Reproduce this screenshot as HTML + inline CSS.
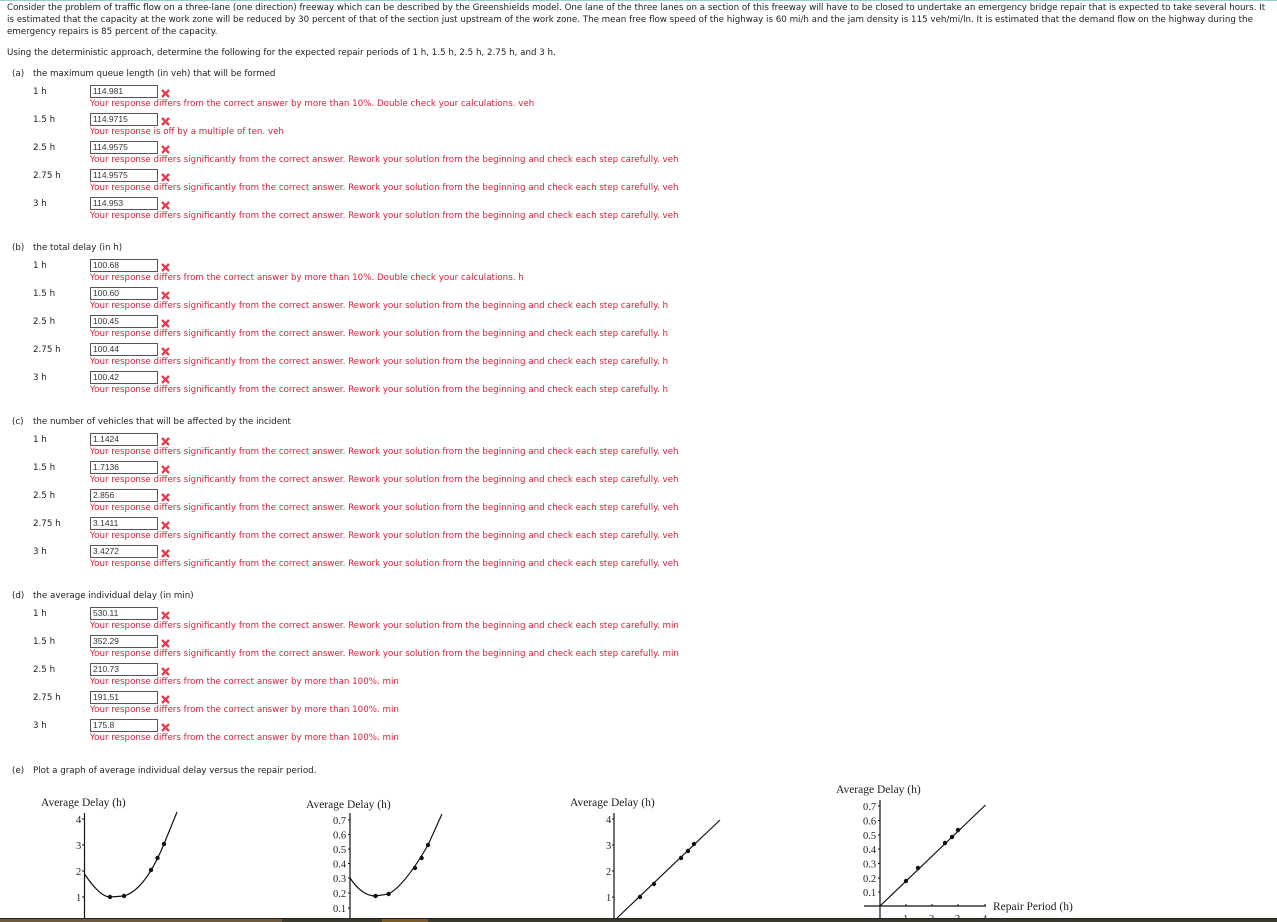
<!DOCTYPE html>
<html><head><meta charset="utf-8"><style>
body{margin:0;width:1277px;height:922px;overflow:hidden;background:#fff;position:relative;font-family:"DejaVu Sans","Liberation Sans",sans-serif;font-size:8.7px;color:#222;}
.t{position:absolute;white-space:nowrap;line-height:12px;}
.e{color:#d8203c;}
.b{position:absolute;width:64px;height:11px;border:1px solid #555;font-family:"Liberation Sans",sans-serif;font-size:8.5px;line-height:11px;padding-left:2px;color:#333;box-sizing:content-box;}
.x{position:absolute;width:9px;height:9px;}
svg text{font-family:"Liberation Serif","DejaVu Serif",serif;font-size:10.5px;fill:#222;}
svg text.ti{font-size:11.5px;}
</style></head><body>
<div style="position:absolute;left:0;top:0;width:1277px;height:1px;background:#9cc"></div>
<div class="t" style="left:7px;top:2px">Consider the problem of traffic flow on a three-lane (one direction) freeway which can be described by the Greenshields model. One lane of the three lanes on a section of this freeway will have to be closed to undertake an emergency bridge repair that is expected to take several hours. It</div>
<div class="t" style="left:7px;top:14px">is estimated that the capacity at the work zone will be reduced by 30 percent of that of the section just upstream of the work zone. The mean free flow speed of the highway is 60 mi/h and the jam density is 115 veh/mi/ln. It is estimated that the demand flow on the highway during the</div>
<div class="t" style="left:7px;top:26px">emergency repairs is 85 percent of the capacity.</div>
<div class="t" style="left:7px;top:47px">Using the deterministic approach, determine the following for the expected repair periods of 1 h, 1.5 h, 2.5 h, 2.75 h, and 3 h.</div>
<div id="q"></div>
<script>
var S="Your response differs significantly from the correct answer. Rework your solution from the beginning and check each step carefully. ";
var A="Your response differs from the correct answer by more than 10%. Double check your calculations. ";
var C="Your response differs from the correct answer by more than 100%. ";
var secs=[
 [74,"(a)","the maximum queue length (in veh) that will be formed",["114.981","114.9715","114.9575","114.9575","114.953"],[A+"veh","Your response is off by a multiple of ten. veh",S+"veh",S+"veh",S+"veh"]],
 [248,"(b)","the total delay (in h)",["100.68","100.60","100.45","100.44","100.42"],[A+"h",S+"h",S+"h",S+"h",S+"h"]],
 [422,"(c)","the number of vehicles that will be affected by the incident",["1.1424","1.7136","2.856","3.1411","3.4272"],[S+"veh",S+"veh",S+"veh",S+"veh",S+"veh"]],
 [596,"(d)","the average individual delay (in min)",["530.11","352.29","210.73","191.51","175.8"],[S+"min",S+"min",C+"min",C+"min",C+"min"]]
];
var L=["1 h","1.5 h","2.5 h","2.75 h","3 h"];
var h="";
secs.forEach(function(s){var H=s[0];
 h+='<div class="t" style="left:12px;top:'+(H-6)+'px">'+s[1]+'</div><div class="t" style="left:33px;top:'+(H-6)+'px">'+s[2]+'</div>';
 for(var i=0;i<5;i++){var y=H+28*i;
  h+='<div class="t" style="left:33px;top:'+(y+12)+'px">'+L[i]+'</div>';
  h+='<div class="b" style="left:90px;top:'+(y+11)+'px">'+s[3][i]+'</div>';
  h+='<svg class="x" style="left:161px;top:'+(y+15)+'px" viewBox="0 0 9 9"><path d="M1 1L8 8M8 1L1 8" stroke="#e0404e" stroke-width="2.4"/></svg>';
  h+='<div class="t e" style="left:90px;top:'+(y+24)+'px">'+s[4][i]+'</div>';
 }});
document.getElementById("q").innerHTML=h;
</script>
<div class="t" style="left:12px;top:765px">(e)</div><div class="t" style="left:33px;top:765px">Plot a graph of average individual delay versus the repair period.</div>
<svg style="position:absolute;left:0;top:780px" width="1277" height="142" viewBox="0 780 1277 142">
<g stroke="#111" fill="none" stroke-width="1.2">
<line x1="84.5" y1="813" x2="84.5" y2="922"/>
<path d="M84.5 874 Q100 897 110 897 L124 896 Q145 890 164 844 L177 812"/>
<line x1="350" y1="813" x2="350" y2="922"/>
<path d="M350 878 Q362 896 375.5 896 L388.6 894 Q405 885 428 845 L442 814"/>
<line x1="614" y1="813" x2="614" y2="922"/>
<path d="M617 918 L720 820"/>
<line x1="880" y1="800" x2="880" y2="922"/>
<line x1="864" y1="906" x2="986" y2="906"/>
<path d="M880 906 L985.5 805"/>
</g>
<g stroke="#111" stroke-width="1">
<path d="M82 819h2.5M82 845h2.5M82 871h2.5M82 897h2.5M348 820h2M348 834.5h2M348 849h2M348 863.5h2M348 878h2M348 893h2M348 908h2M612 819h2M612 845h2M612 871h2M612 897h2M878 806h2M878 820.5h2M878 835h2M878 849h2M878 863.5h2M878 878h2M878 892h2M906 904v2M932 904v2M958 904v2M985 904v2"/>
</g>
<g fill="#111">
<circle cx="110" cy="897" r="2.2"/><circle cx="124" cy="896" r="2.2"/><circle cx="151" cy="870" r="2.2"/><circle cx="157.5" cy="858" r="2.2"/><circle cx="164" cy="844" r="2.2"/>
<circle cx="375.5" cy="896" r="2.2"/><circle cx="388.6" cy="894" r="2.2"/><circle cx="415" cy="868" r="2.2"/><circle cx="421.6" cy="858" r="2.2"/><circle cx="428" cy="845" r="2.2"/>
<circle cx="640" cy="897" r="2.2"/><circle cx="654" cy="884" r="2.2"/><circle cx="681" cy="858" r="2.2"/><circle cx="688" cy="851" r="2.2"/><circle cx="694" cy="844" r="2.2"/>
<circle cx="906" cy="881" r="2.2"/><circle cx="918" cy="868" r="2.2"/><circle cx="945" cy="843" r="2.2"/><circle cx="952" cy="837" r="2.2"/><circle cx="958" cy="830" r="2.2"/>
</g>
<text class="ti" x="41" y="806">Average Delay  (h)</text>
<text x="76" y="823">4</text><text x="76" y="849">3</text><text x="76" y="875">2</text><text x="76" y="901">1</text>
<text class="ti" x="306" y="808">Average Delay  (h)</text>
<text x="333" y="824">0.7</text><text x="333" y="838.5">0.6</text><text x="333" y="853">0.5</text><text x="333" y="867.5">0.4</text><text x="333" y="882">0.3</text><text x="333" y="897">0.2</text><text x="333" y="912">0.1</text>
<text class="ti" x="570" y="806">Average Delay  (h)</text>
<text x="606" y="823">4</text><text x="606" y="849">3</text><text x="606" y="875">2</text><text x="606" y="901">1</text>
<text class="ti" x="836" y="793">Average Delay  (h)</text>
<text x="863" y="810">0.7</text><text x="863" y="824.5">0.6</text><text x="863" y="839">0.5</text><text x="863" y="853">0.4</text><text x="863" y="867.5">0.3</text><text x="863" y="882">0.2</text><text x="863" y="896">0.1</text>
<text class="ti" x="993" y="910">Repair Period  (h)</text>
<text x="903" y="922">1</text><text x="929" y="922">2</text><text x="955" y="922">3</text><text x="982" y="922">4</text>
</svg>
<div style="position:absolute;left:0;top:918px;width:1277px;height:1px;background:#222"></div>
<div style="position:absolute;left:0;top:919px;width:1277px;height:3px;background:#3c3a2c"></div>
<div style="position:absolute;left:0;top:919px;width:282px;height:3px;background:#6b5a40"></div>
<div style="position:absolute;left:382px;top:919px;width:46px;height:3px;background:#7a5a2a"></div>
</body></html>
